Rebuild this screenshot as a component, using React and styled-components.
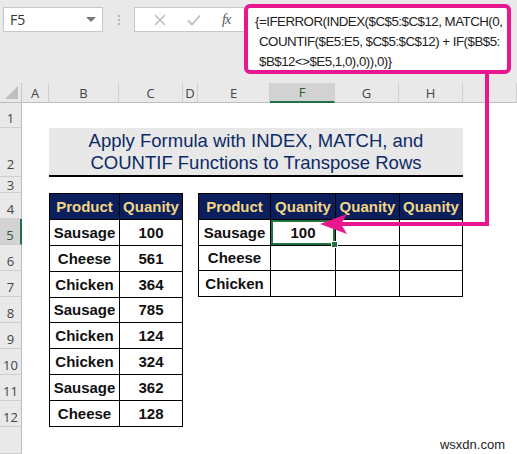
import React from 'react'
import styled, { createGlobalStyle } from 'styled-components'

const GlobalStyle = createGlobalStyle`
	html, body {
		margin: 0;
		padding: 0;
		background: #ffffff;
	}
	#root {
		width: 517px;
		height: 454px;
		overflow: hidden;
	}
`

const NAVY = '#0a1f5c'
const GOLD = '#f2d585'
const PINK = '#e8168f'
const GREEN = '#217346'
const UI_FONT = `"Open Sans", "Noto Sans", sans-serif`
const CELL_FONT = `"Liberation Sans", Arial, sans-serif`

const Page = styled.div`
	position: relative;
	width: 517px;
	height: 454px;
	display: flex;
	flex-direction: column;
	background: #ffffff;
	overflow: hidden;
`

const Toolbar = styled.div`
	height: 83px;
	flex: none;
	display: flex;
	align-items: flex-start;
	padding: 4px 0 0 3px;
	box-sizing: border-box;
	background: #e9e9e9;
`

const NameBox = styled.div`
	width: 100px;
	height: 25px;
	margin-top: 3px;
	box-sizing: border-box;
	display: flex;
	align-items: center;
	justify-content: space-between;
	padding: 0 6px 0 6px;
	background: #ffffff;
	border: 1px solid #c8c8c8;
	font-family: ${UI_FONT};
	font-size: 14px;
	color: #333;
`

const DropArrow = styled.span`
	width: 0;
	height: 0;
	border-left: 5px solid transparent;
	border-right: 5px solid transparent;
	border-top: 5px solid #777;
`

const Grip = styled.div`
	width: 31px;
	height: 25px;
	margin-top: 3px;
	display: flex;
	flex-direction: column;
	align-items: center;
	justify-content: center;
	gap: 2px;

	span {
		width: 2px;
		height: 2px;
		background: #b5b5b5;
	}
`

const FormulaButtons = styled.div`
	width: 110px;
	height: 25px;
	margin-top: 3px;
	box-sizing: border-box;
	display: flex;
	align-items: center;
	justify-content: space-around;
	padding: 0 4px 0 8px;
	background: #ffffff;
	border: 1px solid #c8c8c8;
	border-right: none;
`

const Fx = styled.span`
	font-family: "Liberation Serif", "DejaVu Serif", serif;
	font-style: italic;
	font-size: 14px;
	color: #555;
	letter-spacing: -1px;
`

const FormulaBox = styled.div`
	width: 267px;
	height: 70px;
	box-sizing: border-box;
	padding: 4px 0 0 7px;
	background: #ffffff;
	border: 4px solid ${PINK};
	border-radius: 6px;
	font-family: ${CELL_FONT};
	font-size: 13.3px;
	letter-spacing: -0.5px;
	line-height: 20px;
	color: #222;
	white-space: pre;
`

const FormulaLine = styled.div`
	padding-left: ${(p) => p.$indent || 0}px;
`

const Sheet = styled.div`
	flex: 1;
	display: grid;
	grid-template-columns: 22px 27px 70px 64px 15px 72px 65px 64px 64px 1fr;
	grid-template-rows: 20px 25px 49px 16px repeat(9, 26px) 1fr;
	font-family: ${CELL_FONT};
`

const Corner = styled.div`
	grid-column: 1;
	grid-row: 1;
	position: relative;
	background: #e9e9e9;
	border-right: 1px solid #c8c8c8;
	border-bottom: 1px solid #bdbdbd;

	&::after {
		content: '';
		position: absolute;
		right: 3px;
		bottom: 3px;
		width: 0;
		height: 0;
		border-left: 13px solid transparent;
		border-bottom: 13px solid #bfbfbf;
	}
`

const ColHeader = styled.div`
	grid-row: 1;
	display: flex;
	align-items: center;
	justify-content: center;
	box-sizing: border-box;
	background: ${(p) => (p.$active ? '#d3d3d3' : '#e9e9e9')};
	border-right: 1px solid #cfcfcf;
	border-bottom: ${(p) => (p.$active ? `2px solid ${GREEN}` : '1px solid #bdbdbd')};
	font-family: ${UI_FONT};
	font-size: 13px;
	color: ${(p) => (p.$active ? '#2a5a3c' : '#444')};
`

const RowHeader = styled.div`
	grid-column: 1;
	display: flex;
	align-items: ${(p) => (p.$center ? 'center' : 'flex-end')};
	justify-content: center;
	padding-bottom: ${(p) => (p.$center ? 0 : p.$pad)}px;
	box-sizing: border-box;
	background: ${(p) => (p.$active ? '#d3d3d3' : '#e9e9e9')};
	border-right: ${(p) => (p.$active ? `2px solid ${GREEN}` : '1px solid #bdbdbd')};
	border-bottom: 1px solid #cfcfcf;
	font-family: ${UI_FONT};
	font-size: 13px;
	line-height: 12px;
	color: ${(p) => (p.$active ? '#2a5a3c' : '#444')};
`

const Title = styled.div`
	grid-column: 3 / 10;
	grid-row: 3;
	display: flex;
	flex-direction: column;
	align-items: center;
	justify-content: flex-end;
	padding-bottom: 1px;
	box-sizing: border-box;
	background: #e8e8e8;
	border-bottom: 2px solid #000;
	font-size: 18.5px;
	line-height: 22px;
	color: #0d2a66;
	text-align: center;
`

const Table = styled.div`
	grid-column: ${(p) => p.$cols};
	grid-row: ${(p) => p.$rows};
	display: grid;
	grid-template-columns: ${(p) => p.$template};
	grid-auto-rows: 1fr;
	gap: 1px;
	box-sizing: border-box;
	background: #000;
	border: 1px solid #000;
`

const Cell = styled.div`
	position: relative;
	display: flex;
	align-items: center;
	justify-content: center;
	background: ${(p) => (p.$head ? NAVY : '#ffffff')};
	color: ${(p) => (p.$head ? GOLD : '#111')};
	font-weight: bold;
	font-size: 15px;
	box-shadow: ${(p) => (p.$selected ? `inset 0 0 0 2px ${GREEN}` : 'none')};
`

const FillHandle = styled.span`
	position: absolute;
	right: -3px;
	bottom: -3px;
	width: 5px;
	height: 5px;
	background: ${GREEN};
	border: 1px solid #fff;
	z-index: 2;
`

const Watermark = styled.div`
	position: absolute;
	right: 12px;
	bottom: 2px;
	font-family: ${CELL_FONT};
	font-size: 13px;
	color: #222;
`

const Overlay = styled.svg`
	position: absolute;
	left: 0;
	top: 0;
	pointer-events: none;
`

const columns = ['A', 'B', 'C', 'D', 'E', 'F', 'G', 'H', '']
const rows = ['1', '2', '3', '4', '5', '6', '7', '8', '9', '10', '11', '12', '']

const data = [
	['Sausage', '100'],
	['Cheese', '561'],
	['Chicken', '364'],
	['Sausage', '785'],
	['Chicken', '124'],
	['Chicken', '324'],
	['Sausage', '362'],
	['Cheese', '128'],
]

const CrossIcon = () => (
	<svg width='14' height='14' viewBox='0 0 14 14'>
		<path d='M2 2 L12 12 M12 2 L2 12' stroke='#bdbdbd' strokeWidth='1.6' fill='none' />
	</svg>
)

const CheckIcon = () => (
	<svg width='16' height='14' viewBox='0 0 16 14'>
		<path d='M2 7.5 L6 11.5 L14 2.5' stroke='#bdbdbd' strokeWidth='1.8' fill='none' />
	</svg>
)

const App = () => {
	return (
		<Page>
			<GlobalStyle />
			<Toolbar>
				<NameBox>
					F5
					<DropArrow />
				</NameBox>
				<Grip>
					<span />
					<span />
					<span />
				</Grip>
				<FormulaButtons>
					<CrossIcon />
					<CheckIcon />
					<Fx>fx</Fx>
				</FormulaButtons>
				<FormulaBox>
					<FormulaLine>{'{=IFERROR(INDEX($C$5:$C$12, MATCH(0,'}</FormulaLine>
					<FormulaLine $indent={4}>{'COUNTIF($E5:E5, $C$5:$C$12) + IF($B$5:'}</FormulaLine>
					<FormulaLine $indent={4}>{'$B$12<>$E5,1,0),0)),0)}'}</FormulaLine>
				</FormulaBox>
			</Toolbar>

			<Sheet>
				<Corner />
				{columns.map((c, i) => (
					<ColHeader key={i} style={{ gridColumn: i + 2 }} $active={c === 'F'}>
						{c}
					</ColHeader>
				))}
				{rows.map((r, i) => (
					<RowHeader
						key={i}
						style={{ gridRow: i + 2 }}
						$active={r === '5'}
						$center={r === '3'}
						$pad={r === '2' ? 6 : 3}
					>
						{r}
					</RowHeader>
				))}

				<Title>
					<div>Apply Formula with INDEX, MATCH, and</div>
					<div>COUNTIF Functions to Transpose Rows</div>
				</Title>

				<Table $cols='3 / 5' $rows='5 / 14' $template='69px 1fr'>
					<Cell $head>Product</Cell>
					<Cell $head>Quanity</Cell>
					{data.map(([name, qty], i) => (
						<React.Fragment key={i}>
							<Cell>{name}</Cell>
							<Cell>{qty}</Cell>
						</React.Fragment>
					))}
				</Table>

				<Table $cols='6 / 10' $rows='5 / 9' $template='71px 64px 63px 1fr'>
					<Cell $head>Product</Cell>
					<Cell $head>Quanity</Cell>
					<Cell $head>Quanity</Cell>
					<Cell $head>Quanity</Cell>
					<Cell>Sausage</Cell>
					<Cell $selected>
						100
						<FillHandle />
					</Cell>
					<Cell />
					<Cell />
					{['Cheese', 'Chicken'].map((name) => (
						<React.Fragment key={name}>
							<Cell>{name}</Cell>
							<Cell />
							<Cell />
							<Cell />
						</React.Fragment>
					))}
				</Table>
			</Sheet>

			<Overlay width='517' height='454' viewBox='0 0 517 454'>
				<path
					d='M487 72 L487 224 L340 224'
					stroke={PINK}
					strokeWidth='4'
					fill='none'
				/>
				<polygon points='320,224 347,214 341,224 347,234' fill={PINK} />
			</Overlay>
			<Watermark>wsxdn.com</Watermark>
		</Page>
	)
}

export default App
